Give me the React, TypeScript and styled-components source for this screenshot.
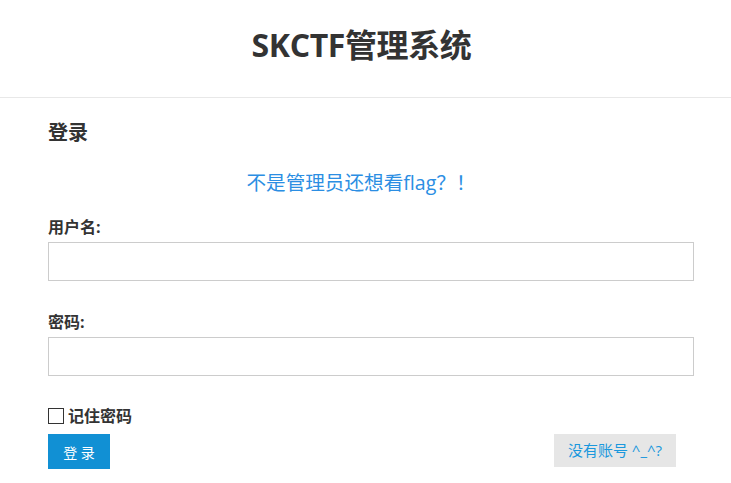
import React from "react";
import styled, { createGlobalStyle } from "styled-components";

const GlobalStyle = createGlobalStyle`
	body {
		margin: 0;
		background: #fff;
		font-family: "Open Sans", "Noto Sans CJK SC", sans-serif;
		color: #333;
	}
`;

const App = () => {
	return (
		<>
			<GlobalStyle />
			<Header>
				<Title>SKCTF管理系统</Title>
			</Header>
			<Main>
				<Heading>登录</Heading>
				<Notice>不是管理员还想看flag？！</Notice>
				<form onSubmit={(e) => e.preventDefault()}>
					<Field>
						<Label htmlFor="username">用户名:</Label>
						<Input id="username" type="text" />
					</Field>
					<Field>
						<Label htmlFor="password">密码:</Label>
						<Input id="password" type="password" />
					</Field>
					<Remember>
						<CheckBox type="checkbox" />
						<span>记住密码</span>
					</Remember>
					<Actions>
						<PrimaryButton type="submit">登 录</PrimaryButton>
						<GhostButton type="button">没有账号 ^_^?</GhostButton>
					</Actions>
				</form>
			</Main>
		</>
	);
};

export default App;

const Header = styled.header`
	display: flex;
	align-items: center;
	justify-content: center;
	height: 97px;
	border-bottom: 1px solid #e8e8e8;
`;

const Title = styled.h1`
	margin: 0 8px 12px 0;
	font-size: 32px;
	font-weight: 700;
	color: #333;
	letter-spacing: -0.4px;
`;

const Main = styled.main`
	padding: 21px 37px 0 48px;
`;

const Heading = styled.h2`
	margin: 0;
	font-size: 20px;
	line-height: 28px;
	font-weight: 700;
	color: #333;
`;

const Notice = styled.p`
	margin: 22px 0 0;
	text-align: center;
	font-size: 19.6px;
	line-height: 28px;
	color: #2b8ee3;
	padding-right: 20px;
`;

const Field = styled.div`
	display: flex;
	flex-direction: column;
	margin-top: 19px;

	& + & {
		margin-top: 30px;
	}
`;

const Label = styled.label`
	font-size: 16px;
	line-height: 22px;
	font-weight: 700;
	color: #333;
	margin-bottom: 4px;
`;

const Input = styled.input`
	box-sizing: border-box;
	height: 39px;
	width: 100%;
	border: 1px solid #ccc;
	padding: 0 10px;
	font-size: 15px;
	outline: none;
`;

const Remember = styled.label`
	display: flex;
	align-items: center;
	gap: 4px;
	margin-top: 29px;
	font-size: 16px;
	line-height: 22px;
	font-weight: 700;
	color: #333;
`;

const CheckBox = styled.input`
	appearance: none;
	box-sizing: border-box;
	width: 16px;
	height: 16px;
	margin: 0;
	border: 1px solid #333;
	background: #fff;
`;

const Actions = styled.div`
	display: flex;
	align-items: flex-start;
	justify-content: space-between;
	margin-top: 7px;
	padding-right: 18px;
`;

const PrimaryButton = styled.button`
	width: 62px;
	height: 35px;
	border: none;
	background: #1190d4;
	color: #fff;
	font-size: 14px;
	font-family: inherit;
	padding: 0;
`;

const GhostButton = styled.button`
	width: 122px;
	height: 33px;
	border: none;
	background: #e6e6e6;
	color: #1a98dd;
	font-size: 15px;
	font-family: inherit;
	padding: 0 0 3px;
`;
